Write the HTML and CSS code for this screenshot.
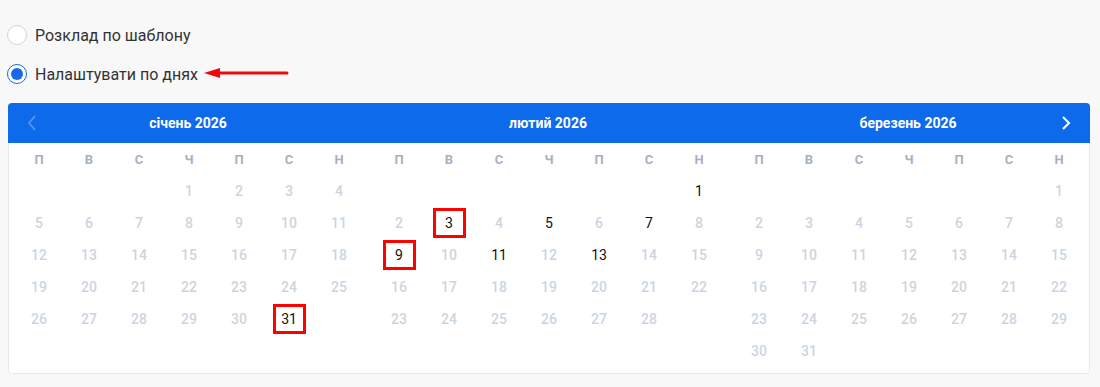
FILE: index.html
```html
<!DOCTYPE html>
<html lang="uk">
<head>
    <meta charset="UTF-8">
    <meta name="viewport" content="width=device-width, initial-scale=1.0">
    <title>Розклад</title>
    <link rel="stylesheet" href="styles.css">
</head>
<body>
    <div class="options">
        <label class="option">
            <span class="radio"></span>
            Розклад по шаблону
        </label>
        <label class="option">
            <span class="radio checked"></span>
            Налаштувати по днях
            <svg class="pointer" width="86" height="12" viewBox="0 0 86 12">
                <line x1="12" y1="6" x2="83" y2="6" stroke="#ee0a0a" stroke-width="3" stroke-linecap="round"/>
                <polygon points="0,6 16,1 16,11" fill="#ee0a0a"/>
            </svg>
        </label>
    </div>

    <div class="calendar">
        <div class="cal-head">
            <span class="nav prev">
                <svg width="10" height="16" viewBox="0 0 10 16"><polyline points="8,1 2,8 8,15" fill="none" stroke="currentColor" stroke-width="1.6"/></svg>
            </span>
            <div class="month-title">січень 2026</div>
            <div class="month-title">лютий 2026</div>
            <div class="month-title">березень 2026</div>
            <span class="nav next">
                <svg width="10" height="16" viewBox="0 0 10 16"><polyline points="2,2 8,8 2,14" fill="none" stroke="currentColor" stroke-width="2"/></svg>
            </span>
        </div>
        <div class="cal-body" id="calBody"></div>
    </div>

    <script>
        const months = [
            { offset: 3, days: 31, active: [31], selected: [31] },
            { offset: 6, days: 28, active: [1, 3, 5, 7, 9, 11, 13], selected: [3, 9] },
            { offset: 6, days: 31, active: [], selected: [] }
        ];
        const weekdays = ['П', 'В', 'С', 'Ч', 'П', 'С', 'Н'];
        const body = document.getElementById('calBody');

        months.forEach(m => {
            const grid = document.createElement('div');
            grid.className = 'month';

            weekdays.forEach(w => {
                const el = document.createElement('div');
                el.className = 'weekday';
                el.textContent = w;
                grid.appendChild(el);
            });

            // empty cells before the 1st
            for (let i = 0; i < m.offset; i++) {
                grid.appendChild(document.createElement('div'));
            }

            for (let d = 1; d <= m.days; d++) {
                const cell = document.createElement('div');
                cell.className = 'day';
                const num = document.createElement('span');
                num.textContent = d;
                if (m.active.includes(d)) cell.classList.add('active');
                if (m.selected.includes(d)) num.className = 'picked';
                cell.appendChild(num);
                grid.appendChild(cell);
            }

            body.appendChild(grid);
        });
    </script>
</body>
</html>
```

FILE: styles.css
```css
body {
    font-family: Roboto, "Noto Sans", Arial, sans-serif;
    margin: 0;
    background-color: #f8f8f8;
    color: #333;
}

.options {
    display: flex;
    flex-direction: column;
    gap: 19px;
    padding: 25px 0 0 7px;
}

.option {
    display: flex;
    align-items: center;
    height: 20px;
    font-size: 16px;
    color: #333;
}

.radio {
    width: 20px;
    height: 20px;
    box-sizing: border-box;
    border: 1px solid #cfd4da;
    border-radius: 50%;
    background: white;
    margin-right: 8px;
    display: flex;
    align-items: center;
    justify-content: center;
}

.radio.checked {
    border-color: #1769e8;
}

.radio.checked::after {
    content: "";
    width: 12px;
    height: 12px;
    border-radius: 50%;
    background: #1769e8;
}

.pointer {
    margin-left: 6px;
    margin-top: -2px;
}

.calendar {
    width: 1082px;
    margin: 19px 0 0 8px;
    box-sizing: border-box;
    background: white;
    border: 1px solid #e8e8e8;
    border-radius: 4px;
}

.cal-head {
    position: relative;
    display: flex;
    gap: 10px;
    padding: 0 5px;
    height: 40px;
    margin: -1px -1px 0;
    background: #0d6aea;
    border-radius: 4px 4px 0 0;
}

.month-title {
    width: 350px;
    display: flex;
    align-items: center;
    justify-content: center;
    color: white;
    font-size: 14px;
    font-weight: 700;
}

.nav {
    position: absolute;
    top: 12px;
    display: flex;
}

.nav.prev {
    left: 19px;
    color: #5c9bf2;
}

.nav.next {
    right: 19px;
    color: white;
}

.cal-body {
    display: flex;
    gap: 10px;
    padding: 0 5px 6px;
}

.month {
    display: grid;
    grid-template-columns: repeat(7, 50px);
    grid-auto-rows: 32px;
}

.weekday,
.day {
    display: flex;
    align-items: center;
    justify-content: center;
}

.weekday {
    font-size: 13px;
    font-weight: 700;
    color: #a6b1c1;
}

.day {
    font-size: 14px;
    font-weight: 500;
    color: #cbd5e1;
}

.day.active {
    font-weight: 400;
    color: #111;
}

.day .picked {
    width: 33px;
    height: 30px;
    box-sizing: border-box;
    border: 3px solid #ff0000;
    display: flex;
    align-items: center;
    justify-content: center;
}
```
